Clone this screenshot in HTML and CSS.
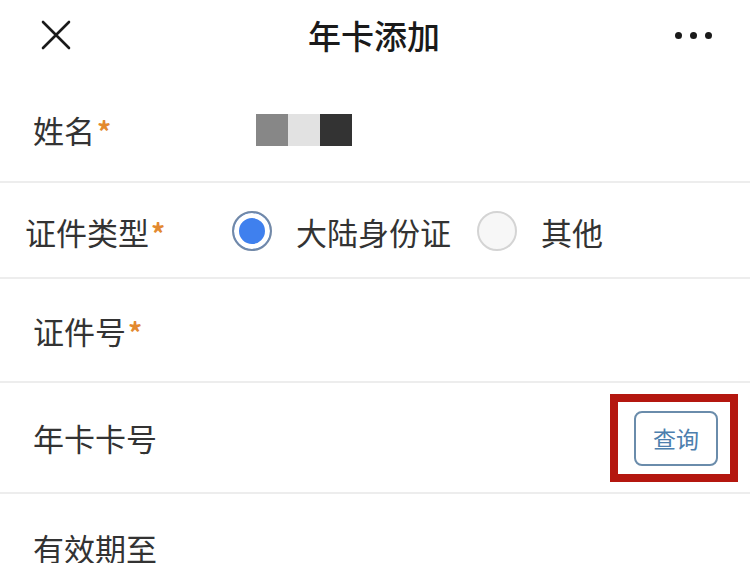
FILE: index.html
```html
<!DOCTYPE html>
<html lang="zh-CN">
<head>
  <meta charset="UTF-8" />
  <meta name="viewport" content="width=device-width, initial-scale=1.0" />
  <title>年卡添加</title>
  <link rel="stylesheet" href="styles.css">
</head>
<body>
  <div class="topbar">
    <svg class="close" width="30" height="30" viewBox="0 0 30 30">
      <path d="M2 2 L28 28 M28 2 L2 28" stroke="#1a1a1a" stroke-width="2.6" stroke-linecap="round" fill="none"/>
    </svg>
    <h1>年卡添加</h1>
    <div class="more"><span></span><span></span><span></span></div>
  </div>

  <form class="form">
    <div class="row row-name">
      <label class="label">姓名<i>*</i></label>
      <div class="masked"><span class="m1"></span><span class="m2"></span><span class="m3"></span></div>
    </div>

    <div class="row row-type">
      <label class="label">证件类型<i>*</i></label>
      <div class="radios">
        <span class="radio checked"></span>
        <span class="radio-text">大陆身份证</span>
        <span class="radio"></span>
        <span class="radio-text">其他</span>
      </div>
    </div>

    <div class="row row-id">
      <label class="label">证件号<i>*</i></label>
    </div>

    <div class="row row-card">
      <label class="label">年卡卡号</label>
      <div class="mark">
        <button type="button" class="query">查询</button>
      </div>
    </div>

    <div class="row row-date">
      <label class="label">有效期至</label>
    </div>
  </form>
</body>
</html>
```

FILE: styles.css
```css
html, body {
  height: 563px;
  overflow: hidden;
}
body {
  margin: 0;
  background: #fff;
  color: #333;
  font-family: "Noto Sans CJK SC", "Noto Sans", sans-serif;
}
.topbar {
  height: 70px;
  display: flex;
  align-items: center;
  justify-content: space-between;
  padding: 0 38px 0 41px;
}
.close {
  display: block;
}
.topbar h1 {
  margin: 0;
  font-size: 33px;
  font-weight: 500;
  color: #1a1a1a;
  padding-left: 2px;
}
.more {
  display: flex;
  gap: 8px;
}
.more span {
  width: 7px;
  height: 7px;
  border-radius: 50%;
  background: #1a1a1a;
}
.row {
  display: flex;
  align-items: center;
  border-bottom: 2px solid #ededed;
  padding-left: 33px;
  font-size: 31px;
  line-height: 1;
}
.label {
  display: flex;
  align-items: flex-start;
  color: #333;
}
.label i {
  font-style: normal;
  font-weight: 700;
  font-size: 28px;
  color: #e3892f;
  margin-left: 2px;
  margin-top: 3px;
}
.row-name {
  height: 103px;
  padding-top: 8px;
}
.row-name .label {
  width: 223px;
}
.masked {
  display: flex;
}
.masked span {
  width: 32px;
  height: 32px;
}
.m1 { background: #878787; }
.m2 { background: #e2e2e2; }
.m3 { background: #333; }
.row-type {
  height: 92px;
  padding-top: 2px;
  padding-left: 25px;
}
.row-type .label {
  width: 207px;
}
.radios {
  display: flex;
  align-items: center;
}
.radio {
  width: 36px;
  height: 36px;
  border-radius: 50%;
  border: 2px solid #d4d4d4;
  background: #f7f7f7;
  box-sizing: content-box;
}
.radio.checked {
  border-color: #7289a8;
  background: #3f80ee;
  box-shadow: inset 0 0 0 5px #fff;
}
.radio-text {
  margin: 0 26px 0 24px;
}
.row-id {
  height: 102px;
}
.row-card {
  height: 109px;
  justify-content: space-between;
  padding-right: 12px;
}
.mark {
  border: 8px solid #b4170f;
  padding: 9px 12px 8px 16px;
  background: #fff;
}
.query {
  display: block;
  width: 84px;
  height: 55px;
  border: 2px solid #6a8cab;
  border-radius: 8px;
  background: #fff;
  color: #4d7fae;
  font-family: "Noto Sans CJK SC", sans-serif;
  font-size: 23px;
  padding: 0;
}
.row-date {
  height: 106px;
  border-bottom: none;
}
```
